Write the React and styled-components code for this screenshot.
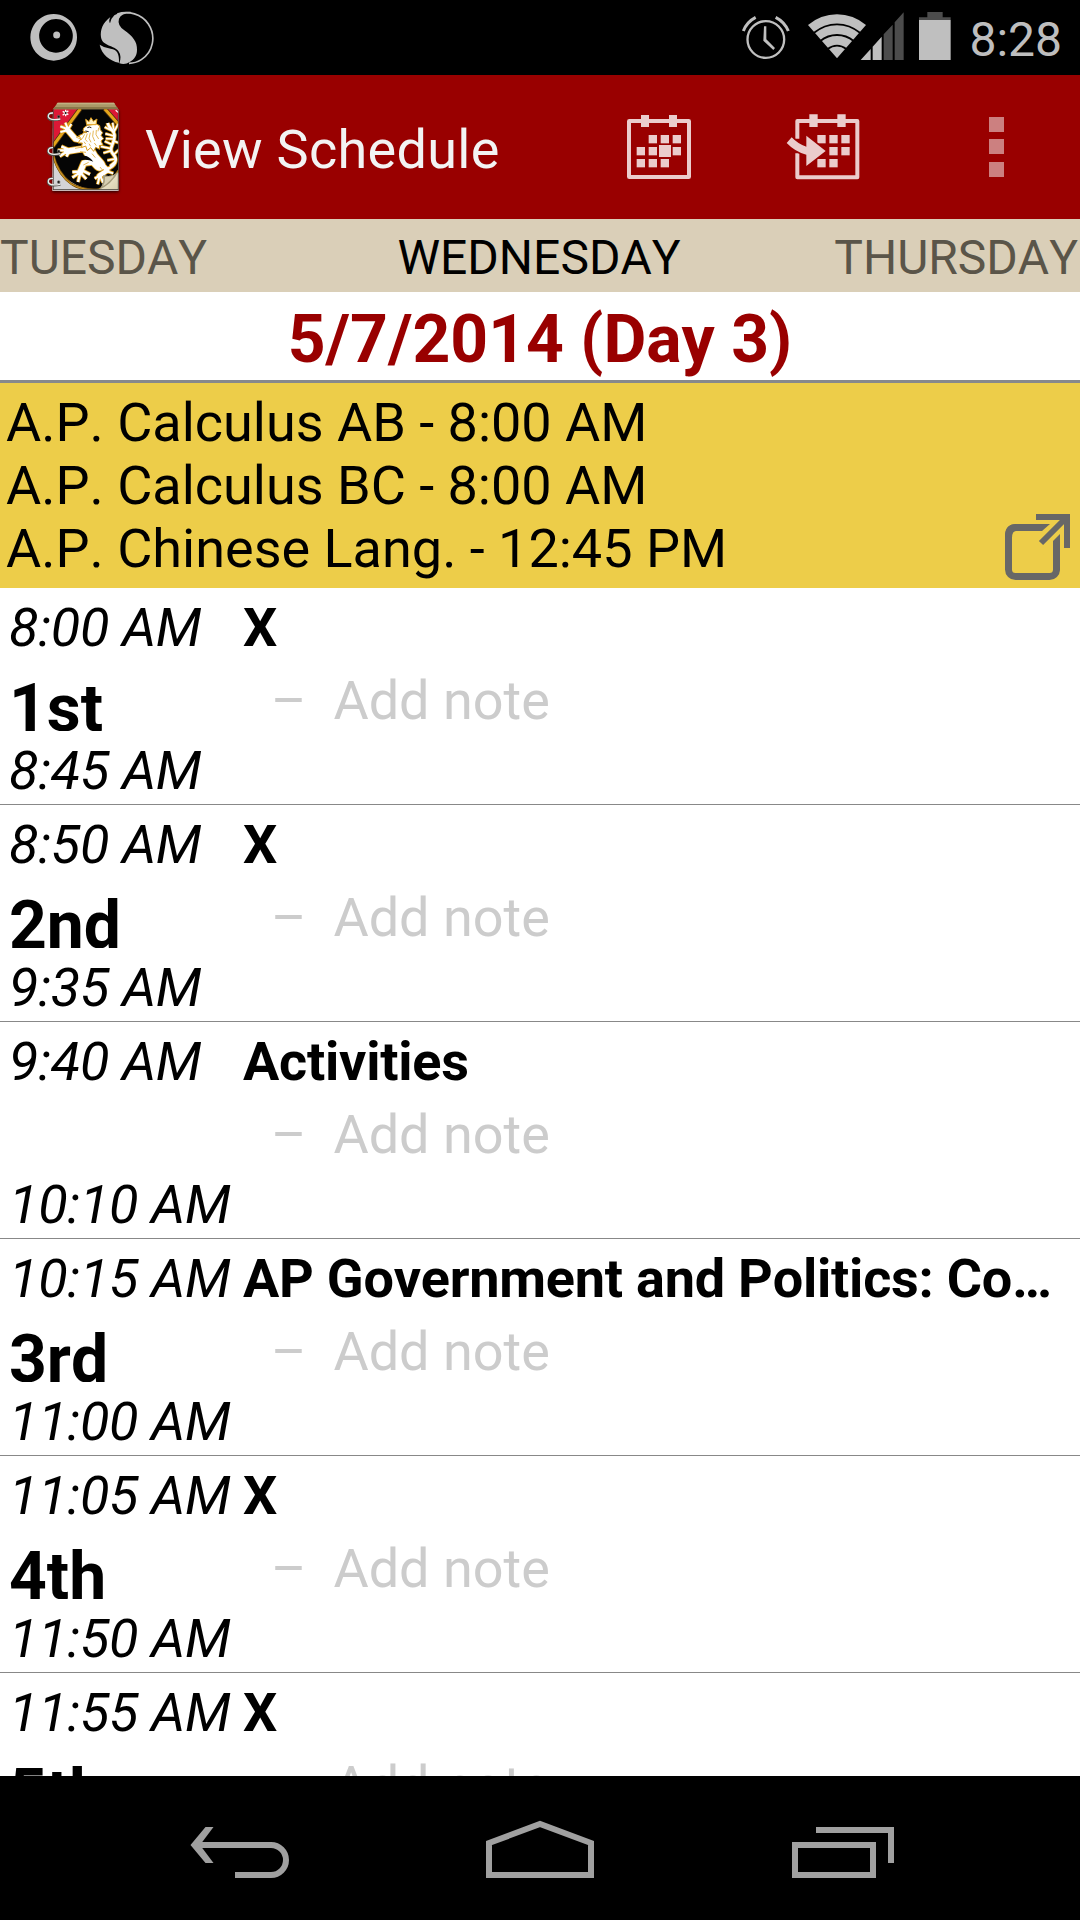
import React from "react";
import styled, { createGlobalStyle } from "styled-components";

const GlobalStyle = createGlobalStyle`
  * { box-sizing: border-box; }
  html, body { margin: 0; padding: 0; background: #000; }
  body { font-family: Roboto, "Noto Sans", sans-serif; font-size: 54px; line-height: 63px; color: #000; font-kerning: none; }
  svg { display: block; flex: none; }
`;

const Screen = styled.div`
  width: 1080px;
  height: 1920px;
  display: flex;
  flex-direction: column;
  overflow: hidden;
  background: #fff;
`;

const StatusBar = styled.div`
  flex: none;
  height: 75px;
  display: flex;
  align-items: center;
  justify-content: space-between;
  padding: 0 18px 0 30px;
  background: #000;
`;

const StatusGroup = styled.div`
  display: flex;
  align-items: center;
`;

const Clock = styled.span`
  margin-left: 18px;
  padding-top: 4px;
  font-size: 48px;
  line-height: 56px;
  color: #bebebe;
`;

const ActionBar = styled.header`
  flex: none;
  height: 144px;
  display: flex;
  align-items: center;
  padding-left: 46px;
  background: #990000;
`;

const Title = styled.h1`
  flex: 1;
  margin: 0;
  padding: 5px 0 0 23px;
  font-size: 54px;
  font-weight: 400;
  letter-spacing: 0.3px;
  white-space: nowrap;
  color: #f3f3f3;
`;

const Action = styled.button`
  width: ${(p) => p.$width}px;
  height: 144px;
  padding: 0;
  border: 0;
  background: none;
  display: flex;
  align-items: center;
  justify-content: center;
`;

const DayStrip = styled.nav`
  flex: none;
  height: 73px;
  display: grid;
  grid-template-columns: 1fr auto 1fr;
  padding: 11px 2px 0 0;
  background: #dacfb8;
`;

const DayTab = styled.span`
  font-size: 48px;
  line-height: 56px;
  text-align: ${(p) => p.$align};
  color: ${(p) => (p.$active ? "#000" : "#5a5549")};
`;

const DateHeading = styled.h2`
  flex: none;
  height: 91px;
  margin: 0;
  padding-top: 9px;
  border-bottom: 3px solid #88898c;
  font-size: 66px;
  line-height: 77px;
  font-weight: 700;
  text-align: center;
  color: #990000;
`;

const ExamBanner = styled.section`
  flex: none;
  height: 205px;
  display: flex;
  align-items: flex-end;
  justify-content: space-between;
  padding: 8px 10px 8px 6px;
  background: #edcd49;
`;

const ExamList = styled.div`
  display: flex;
  flex-direction: column;
`;

const Exam = styled.div`
  white-space: nowrap;
`;

const Periods = styled.main`
  flex: 1;
  min-height: 0;
  overflow: hidden;
`;

const PeriodRow = styled.article`
  height: 217px;
  display: grid;
  grid-template-columns: 243px 1fr;
  padding-top: 8px;
  border-bottom: 1px solid #888;
`;

const TimeColumn = styled.div`
  display: flex;
  flex-direction: column;
  padding-left: 9px;
`;

const Time = styled.time`
  height: 63px;
  font-style: italic;
  white-space: nowrap;
  letter-spacing: -0.3px;
`;

const PeriodName = styled.strong`
  height: 61px;
  margin: 11px 0 8px;
  overflow: hidden;
  font-size: 66px;
  line-height: 77px;
  font-weight: 700;
`;

const CourseColumn = styled.div`
  min-width: 0;
`;

const CourseName = styled.h3`
  margin: 0;
  font-size: 54px;
  line-height: 63px;
  font-weight: 700;
  white-space: nowrap;
  letter-spacing: -0.23px;
`;

const Note = styled.div`
  display: flex;
  gap: 27px;
  margin: 10px 0 0 28px;
  color: #ccc;
`;

const NavBar = styled.footer`
  flex: none;
  height: 144px;
  display: flex;
  align-items: center;
  justify-content: center;
  background: #000;
`;

const NavButton = styled.button`
  width: ${(p) => p.$width}px;
  height: 144px;
  padding: 0;
  border: 0;
  background: none;
`;

const RingIcon = () => (
  <svg width="48" height="75" viewBox="90 0 144 225">
    <path fillRule="evenodd" fill="#bfbfbf" d="M161 42a70 70 0 1 0 .1 0zM168 57a50.500 50.500 0 1 1 -.1 0z" />
    <circle cx="170" cy="105" r="10.500" fill="#bfbfbf" />
  </svg>
);

const FlameIcon = () => (
  <svg width="55" height="75" viewBox="297 0 165 225" style={{ marginLeft: 21 }}>
    <path d="M352 42C385 31 425 42 445 72C469 108 460 156 424 179C413 186 401 190 387 190" fill="none" stroke="#bfbfbf" strokeWidth="5" />
    <path fill="#bfbfbf" d="M303 112C300 88 309 68 331 51Q325 63 330 70Q333 55 343 46Q362 34 392 35L392 40Q364 40 357 56Q351 75 373 91C399 109 412 127 411 149C411 168 402 178 389 186Q376 195 358 190Q366 168 355 153C344 137 307 139 303 112Z" />
    <path fill="#bfbfbf" d="M299 134Q313 144 332 146C352 149 358 161 357 188C329 183 305 163 299 134Z" />
  </svg>
);

const AlarmIcon = () => (
  <svg width="50" height="75" viewBox="62 0 150 225">
    <g fill="none" stroke="#bfbfbf">
      <circle cx="136.500" cy="118.500" r="55" strokeWidth="7" />
      <path d="M69 93Q79 66 106 52M204 93Q193 66 166 52" strokeWidth="9" />
    </g>
    <path fill="#bfbfbf" d="M131 79h7v39l26 26l-5 6l-30-28z" />
  </svg>
);

const WifiIcon = () => (
  <svg width="60" height="75" viewBox="260 0 180 225" style={{ marginLeft: 16 }}>
    <path fill="#bfbfbf" d="M350 175L263 75Q302 43 350 43T437 75Z" />
    <g fill="none" stroke="#000" strokeWidth="5.500">
      <path d="M280 99Q312 73 350 73T420 99" />
      <path d="M300 123Q322 105 350 105T400 123" />
      <path d="M322 147Q335 137 350 137T378 147" />
    </g>
  </svg>
);

const SignalIcon = () => (
  <svg width="44" height="75" viewBox="418 0 132 225" style={{ marginLeft: -7 }}>
    <path fill="#bfbfbf" d="M420 180L450 147V180ZM456 140L483 110V180H456Z" />
    <path fill="#4c4c4c" d="M489 103L516 74V180H489ZM522 67L549 37V180H522Z" />
  </svg>
);

const BatteryIcon = () => (
  <svg width="32" height="75" viewBox="597 0 96 225" style={{ marginLeft: 15 }}>
    <path fill="#4c4c4c" d="M597 60V52H622V36H668V52H692V60Z" />
    <path fill="#bfbfbf" d="M597 60H692V180H597Z" />
  </svg>
);

const LionLimbs = ({ color, grow }) => (
  <g fill="none" stroke={color} strokeLinejoin="round">
    <g strokeLinecap="round">
      <path d="M258 424L226 418L202 390" strokeWidth={15 + grow} />
      <path d="M264 446L232 450L200 455" strokeWidth={17 + grow} />
      <path d="M276 414L262 446L278 474L298 496" strokeWidth={34 + grow} />
      <path d="M290 486L252 490L240 518" strokeWidth={17 + grow} />
      <path d="M300 488L322 512L298 528" strokeWidth={13 + grow} />
    </g>
    <path d="M203 392L181 397M202 388L181 380M203 386L196 369M206 386L214 373" strokeWidth={6 + grow} />
    <path d="M202 455L179 470M200 452L173 452M204 449L184 440M206 458L199 471" strokeWidth={7 + grow} />
    <path d="M242 516L217 517M240 518L217 534M240 522L234 547M242 520L259 538M246 512L270 524" strokeWidth={7 + grow} />
    <path d="M300 527L284 537M299 528L293 554M301 528L309 549M318 514L340 521" strokeWidth={6 + grow} />
    <path d="M322 508C346 499 355 479 339 463C322 446 348 428 343 404C340 390 326 386 323 370" strokeWidth={8 + grow} />
    <path d="M341 398L355 372M341 390L338 369M333 392L314 382M342 409L316 402M342 418L317 417M338 435L314 425M333 447L302 440M334 453L310 460M340 466L357 450M344 478L322 482M345 486L330 499M343 425L357 430" strokeWidth={5 + grow} />
  </g>
);

const LionHead = () => (
  <g strokeLinejoin="round">
    <path
      d="M262 377L289 373L299 378L301 390L308 399L303 407L311 417L303 424L309 436L298 438L299 449L287 443L281 455L272 444L262 453L257 439L244 444L247 430L234 430L243 417L236 408L248 403L250 399L261 399L249 394L251 385Z"
      fill="#fff" stroke="#d99a16" strokeWidth="3"
    />
    <path d="M260 375L257 359L267 366L273 354L280 365L291 358L288 375Z" fill="#fff3c8" stroke="#e0a122" strokeWidth="3" />
  </g>
);

const LionPlannerIcon = () => (
  <svg width="76" height="100" viewBox="138 292 228 300">
    <defs>
      <clipPath id="cover"><path d="M160 329H355V571H160Z" /></clipPath>
      <linearGradient id="page" x1="0" y1="0" x2="1" y2="1">
        <stop offset="0" stopColor="#8f876f" />
        <stop offset=".35" stopColor="#eee7ce" />
        <stop offset="1" stopColor="#d5ccaa" />
      </linearGradient>
      <filter id="shade" x="-20%" y="-20%" width="140%" height="140%">
        <feDropShadow dx="0" dy="4" stdDeviation="4" floodColor="#000" floodOpacity=".75" />
      </filter>
    </defs>
    <path d="M159 329H356V573H157Z" fill="#ddd" filter="url(#shade)" />
    <path d="M173 309H342L356 330H158Z" fill="#aa9867" />
    <path d="M173 309H342L345 314H169Z" fill="#c0b182" />
    <path d="M163 322H351L356 330H158Z" fill="#897849" />
    <g clipPath="url(#cover)">
      <path d="M158 329H240L158 446Z" fill="#dd1836" />
      <path d="M310 329H357V385Z" fill="#dd1836" />
      <path d="M241 329H314L358 381V515Q333 560 296 572Q224 568 184 520Q165 493 158 462V442Z" fill="#050505" />
      <path d="M241 327L158 440M314 327L358 377" fill="none" stroke="#4d3411" strokeWidth="14" />
      <path d="M241 327L158 440M314 327L358 377" fill="none" stroke="#e5a51b" strokeWidth="9" />
      <path d="M158 462Q172 522 214 553Q250 574 296 570Q332 556 356 512" fill="none" stroke="#76500e" strokeWidth="8" />
      <path d="M158 462Q172 522 214 553Q250 574 296 570Q332 556 356 512" fill="none" stroke="#c99322" strokeWidth="4" />
      <LionLimbs color="#d99a16" grow={5} />
      <LionLimbs color="#fff" grow={0} />
      <LionHead />
      <g fill="none" stroke="#dfaa34" strokeWidth="2.500">
        <path d="M254 404L247 417M262 402L256 419L262 426M271 399L267 416L273 428M280 393L278 410L284 424M289 391L288 405L296 418M296 384L294 395M252 426L257 433M267 432L272 440M283 430L289 438M225 446L248 442M240 456L258 458M228 412L246 420M276 462L286 474M266 488L250 496M300 502L308 512" />
      </g>
      <path d="M262 384Q268 380 274 384M256 394L266 396" fill="none" stroke="#292018" strokeWidth="3" />
      <path d="M243 470Q262 463 280 486Q264 478 246 481Z" fill="#050505" />
      <g stroke="#fff" strokeWidth="4">
        <path d="M188 335L205 345M205 333L188 347M197 330V350M347 332L357 340" />
      </g>
      <path d="M197 336l4 4-4 4-4-4z" fill="#16120c" />
      <path d="M158 479Q173 530 214 557L236 573H158Z" fill="#d4d4d6" />
      <path d="M356 517V573H295Q311 563 310 526Q334 535 356 517Z" fill="url(#page)" />
      <path d="M310 526Q335 535 356 515Q335 555 296 571Q314 553 310 526Z" fill="#a59c7d" />
      <path d="M315 532Q333 532 343 527Q330 547 309 560Q317 547 315 532Z" fill="#d7cfb2" />
      <path d="M159 570H356" stroke="#53504a" strokeWidth="3" />
    </g>
    <path d="M160 329V571M355 329V572" stroke="#272018" strokeWidth="2" />
    <g fill="none">
      {[351, 455, 547].map((y) => (
        <g key={y}>
          <path d={`M159 ${y - 11}Q143 ${y - 12} 144 ${y + 1}Q146 ${y + 15} 181 ${y + 8}`} stroke="#514d48" strokeWidth="7" />
          <path d={`M159 ${y - 11}Q144 ${y - 12} 145 ${y}Q148 ${y + 13} 181 ${y + 7}`} stroke="#eeeeed" strokeWidth="4" />
          <circle cx="176" cy={y} r="4" fill="#181512" stroke="#777" strokeWidth="2" />
        </g>
      ))}
    </g>
  </svg>
);

const Squares = ({ points }) =>
  points.map(([x, y]) => <rect key={`${x}-${y}`} x={x} y={y} width="25" height="25" />);

const CalendarIcon = () => (
  <svg width="64" height="66" viewBox="84 72 192 198" fill="#ebcccc">
    <rect x="90" y="93" width="180" height="168" rx="1" fill="none" stroke="#ebcccc" strokeWidth="12" strokeLinejoin="round" />
    <path d="M126 75h24v36h-24zM210 75h24v36h-24zM180 165h36v36h-36z" />
    <Squares points={[[149, 135], [185, 135], [221, 135], [113, 171], [149, 171], [221, 171], [113, 207], [149, 207], [185, 207]]} />
  </svg>
);

const GoToDateIcon = () => (
  <svg width="74" height="66" viewBox="560 72 222 198" fill="#ebcccc">
    <path d="M594 146V93H774V262H594V190" fill="none" stroke="#ebcccc" strokeWidth="12" strokeLinejoin="round" />
    <path d="M630 73h25v38h-25zM714 73h25v38h-25z" />
    <Squares points={[[654, 135], [690, 135], [726, 135], [690, 171], [726, 171], [654, 207], [690, 207]]} />
    <path d="M621 137L679 183L621 228V194Q588 186 562 159L577 142Q597 163 621 170Z" stroke="#990000" strokeWidth="9" />
    <path d="M621 137L679 183L621 228V194Q588 186 562 159L577 142Q597 163 621 170Z" />
  </svg>
);

const OverflowIcon = () => (
  <svg width="15" height="60" viewBox="0 0 15 60" fill="#cc8080">
    <path d="M0 0h15v15H0zM0 22h15v15H0zM0 45h15v15H0z" />
  </svg>
);

const OpenExternalIcon = () => (
  <svg width="65" height="66" viewBox="1005 514 65 66">
    <rect x="1008.500" y="527.500" width="48" height="49" rx="7" fill="none" stroke="#676767" strokeWidth="7" />
    <path d="M1032 536L1048 520H1064V531L1044 555Z" fill="#edcd49" />
    <path d="M1005 536Q1005 524 1016 524H1050L1042 531H1016Q1012 531 1012 538Z" fill="#676767" />
    <path d="M1053 541L1060 534V566Q1060 577 1053 575Z" fill="#676767" />
    <path d="M1036 517H1067V548M1067 517L1041 543" fill="none" stroke="#676767" strokeWidth="6" />
  </svg>
);

const NavIcon = ({ left, width, children }) => (
  <svg width={width} height="144" viewBox={`${left} 1776 ${width} 144`} fill="none" stroke="#a0a0a0" strokeWidth="6">
    {children}
  </svg>
);

const exams = ["A.P. Calculus AB - 8:00 AM", "A.P. Calculus BC - 8:00 AM", "A.P. Chinese Lang. - 12:45 PM"];

const periods = [
  { start: "8:00 AM", end: "8:45 AM", name: "1st", course: "X" },
  { start: "8:50 AM", end: "9:35 AM", name: "2nd", course: "X" },
  { start: "9:40 AM", end: "10:10 AM", name: "", course: "Activities" },
  { start: "10:15 AM", end: "11:00 AM", name: "3rd", course: "AP Government and Politics: Co…" },
  { start: "11:05 AM", end: "11:50 AM", name: "4th", course: "X" },
  { start: "11:55 AM", end: "", name: "5th", course: "X" },
];

export default function App() {
  return (
    <>
      <GlobalStyle />
      <Screen>
        <StatusBar>
          <StatusGroup>
            <RingIcon />
            <FlameIcon />
          </StatusGroup>
          <StatusGroup>
            <AlarmIcon />
            <WifiIcon />
            <SignalIcon />
            <BatteryIcon />
            <Clock>8:28</Clock>
          </StatusGroup>
        </StatusBar>
        <ActionBar>
          <LionPlannerIcon />
          <Title>View Schedule</Title>
          <Action $width={148} aria-label="Calendar"><CalendarIcon /></Action>
          <Action $width={180} aria-label="Go to date"><GoToDateIcon /></Action>
          <Action $width={167} aria-label="More options"><OverflowIcon /></Action>
        </ActionBar>
        <DayStrip>
          <DayTab $align="left">TUESDAY</DayTab>
          <DayTab $align="center" $active>WEDNESDAY</DayTab>
          <DayTab $align="right">THURSDAY</DayTab>
        </DayStrip>
        <DateHeading>5/7/2014 (Day 3)</DateHeading>
        <ExamBanner>
          <ExamList>
            {exams.map((exam) => <Exam key={exam}>{exam}</Exam>)}
          </ExamList>
          <OpenExternalIcon />
        </ExamBanner>
        <Periods>
          {periods.map((p) => (
            <PeriodRow key={p.start}>
              <TimeColumn>
                <Time>{p.start}</Time>
                <PeriodName>{p.name}</PeriodName>
                <Time>{p.end}</Time>
              </TimeColumn>
              <CourseColumn>
                <CourseName>{p.course}</CourseName>
                <Note>
                  <span>–</span>
                  <span>Add note</span>
                </Note>
              </CourseColumn>
            </PeriodRow>
          ))}
        </Periods>
        <NavBar>
          <NavButton $width={300} aria-label="Back">
            <NavIcon left={90} width={300}>
              <path d="M194 1845H271A15 15 0 0 1 271 1875H235" />
              <path d="M205.500 1827H213.500L200 1845L213.500 1863H205.500L190.500 1845Z" fill="#a0a0a0" stroke="none" />
            </NavIcon>
          </NavButton>
          <NavButton $width={300} aria-label="Home">
            <NavIcon left={390} width={300}>
              <path d="M489 1875V1843L540 1824L591 1843V1875Z" />
            </NavIcon>
          </NavButton>
          <NavButton $width={300} aria-label="Recent apps">
            <NavIcon left={690} width={300}>
              <path d="M795 1845H873V1875H795ZM816 1830H891V1863" />
            </NavIcon>
          </NavButton>
        </NavBar>
      </Screen>
    </>
  );
}
